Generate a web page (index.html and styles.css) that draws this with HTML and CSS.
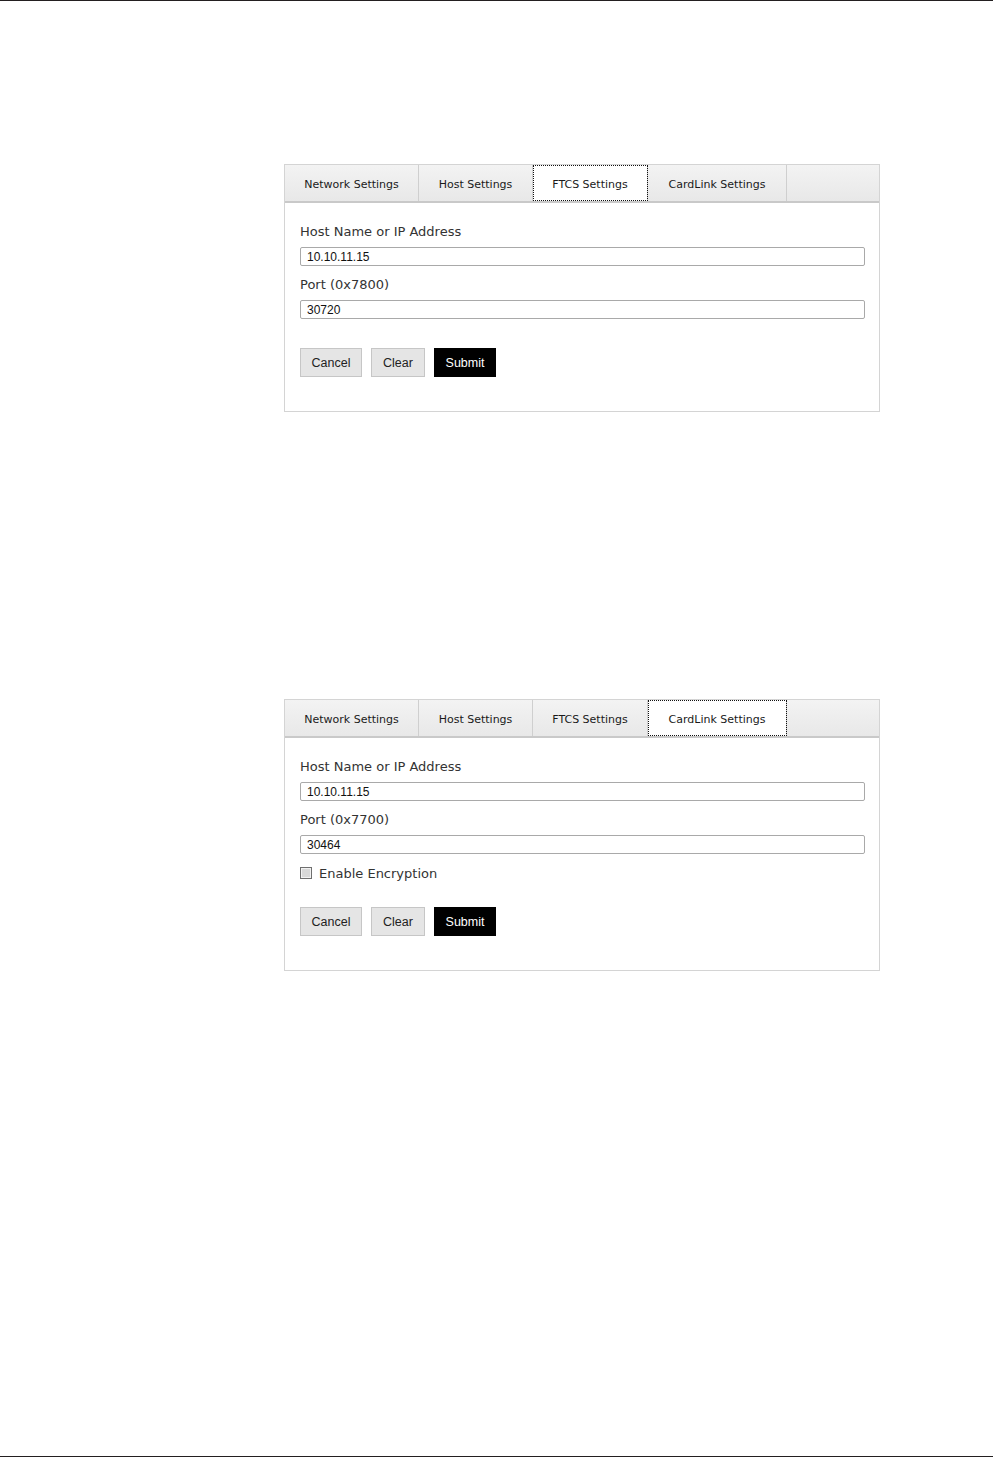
FILE: index.html
```html
<!DOCTYPE html>
<html lang="en">
<head>
<meta charset="UTF-8">
<meta name="viewport" content="width=device-width, initial-scale=1.0">
<title>Settings</title>
<link rel="stylesheet" href="styles.css">
</head>
<body>
<div class="page">

  <div class="panel first">
    <div class="tabs">
      <div class="tab tab-network">Network Settings</div>
      <div class="tab tab-host">Host Settings</div>
      <div class="tab tab-ftcs active">FTCS Settings</div>
      <div class="tab tab-cardlink">CardLink Settings</div>
    </div>
    <div class="panel-body">
      <label class="field-label">Host Name or IP Address</label>
      <input class="field" type="text" value="10.10.11.15">
      <label class="field-label">Port (0x7800)</label>
      <input class="field" type="text" value="30720">
      <div class="buttons">
        <button class="btn btn-cancel">Cancel</button>
        <button class="btn btn-clear">Clear</button>
        <button class="btn btn-submit">Submit</button>
      </div>
    </div>
  </div>

  <div class="panel second">
    <div class="tabs">
      <div class="tab tab-network">Network Settings</div>
      <div class="tab tab-host">Host Settings</div>
      <div class="tab tab-ftcs">FTCS Settings</div>
      <div class="tab tab-cardlink active">CardLink Settings</div>
    </div>
    <div class="panel-body">
      <label class="field-label">Host Name or IP Address</label>
      <input class="field" type="text" value="10.10.11.15">
      <label class="field-label">Port (0x7700)</label>
      <input class="field" type="text" value="30464">
      <div class="check-row">
        <span class="check-box"></span>
        <span class="check-text">Enable Encryption</span>
      </div>
      <div class="buttons buttons-tight">
        <button class="btn btn-cancel">Cancel</button>
        <button class="btn btn-clear">Clear</button>
        <button class="btn btn-submit">Submit</button>
      </div>
    </div>
  </div>

</div>
</body>
</html>
```

FILE: styles.css
```css
html, body {
  margin: 0;
  padding: 0;
  background: #fff;
}
.page {
  box-sizing: border-box;
  height: 1457px;
  border-top: 1px solid #231f20;
  border-bottom: 1px solid #231f20;
  padding-top: 163px;
  font-family: "DejaVu Sans", Verdana, sans-serif;
  color: #333;
}
.panel {
  box-sizing: border-box;
  width: 596px;
  margin-left: 284px;
  border: 1px solid #d4d4d4;
  background: #fff;
}
.second {
  margin-top: 287px;
}
.tabs {
  display: flex;
  height: 36px;
  background: linear-gradient(#f3f3f3, #e8e8e8);
  border-bottom: 2px solid #c9c9c9;
}
.tab {
  box-sizing: border-box;
  height: 36px;
  padding-top: 2px;
  display: flex;
  align-items: center;
  justify-content: center;
  font-size: 11px;
  color: #1a1a1a;
  border-right: 1px solid #cfcfcf;
}
.tab-network { width: 134px; }
.tab-host { width: 114px; }
.tab-ftcs { width: 115px; }
.tab-cardlink { width: 139px; }
.tab.active {
  background: #fff;
  outline: 1px dotted #111;
  outline-offset: -1px;
}
.panel-body {
  padding: 21px 14px 34px 15px;
}
.field-label {
  display: block;
  font-size: 13px;
  line-height: 16px;
  color: #333;
  margin-bottom: 7px;
}
.field {
  display: block;
  box-sizing: border-box;
  width: 100%;
  height: 19px;
  padding: 0 6px;
  border: 1px solid #a9a9a9;
  border-radius: 2px;
  font-family: "Liberation Sans", Arial, sans-serif;
  font-size: 12px;
  color: #111;
  margin-bottom: 11px;
}
.buttons {
  display: flex;
  gap: 9px;
  margin-top: 29px;
}
.buttons-tight {
  margin-top: 26px;
}
.btn {
  box-sizing: border-box;
  height: 29px;
  border: 1px solid #c6c6c6;
  background: #e5e5e5;
  color: #222;
  font-family: "Liberation Sans", Arial, sans-serif;
  font-size: 12.5px;
  padding: 0;
  cursor: pointer;
}
.btn-cancel { width: 62px; }
.btn-clear { width: 54px; }
.btn-submit {
  width: 62px;
  background: #000;
  border-color: #000;
  color: #fff;
}
.check-row {
  display: flex;
  align-items: center;
  gap: 7px;
  height: 16px;
}
.check-box {
  box-sizing: border-box;
  width: 12px;
  height: 12px;
  border: 1px solid #6f6f6f;
  background: #d9d9d9;
  box-shadow: inset 0 0 0 1px #f2f2f2;
}
.check-text {
  font-size: 13px;
  color: #333;
}
```
